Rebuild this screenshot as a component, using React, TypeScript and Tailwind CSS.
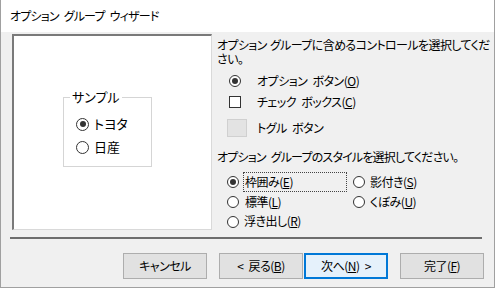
import React from "react";

function Radio({ checked = false, size = 12 }: { checked?: boolean; size?: number }) {
  return (
    <span
      className={
        size === 13
          ? "w-[13px] h-[13px] shrink-0 rounded-full border border-[#333] bg-white flex items-center justify-center"
          : "w-[12px] h-[12px] shrink-0 rounded-full border border-[#333] bg-white flex items-center justify-center"
      }
    >
      {checked && <span className="w-[6px] h-[6px] rounded-full bg-[#333]" />}
    </span>
  );
}

function Button({ children, focused = false }: { children: React.ReactNode; focused?: boolean }) {
  return (
    <div
      className={
        focused
          ? "w-[84px] h-[26px] flex items-center justify-center bg-[#e5f1fb] border-2 border-[#0078d7]"
          : "w-[84px] h-[26px] flex items-center justify-center bg-[#e1e1e1] border border-[#adadad]"
      }
    >
      {children}
    </div>
  );
}

export default function App() {
  return (
    <div className="w-[497px] h-[297px] bg-white text-[12px] text-black font-['Noto_Sans_CJK_JP','Noto_Sans',sans-serif] [font-feature-settings:'palt'] tracking-[-0.5px] [word-spacing:3px] whitespace-nowrap overflow-hidden">
      <div className="w-[495px] h-[288px] border-l border-r border-b border-[#a0a0a0] flex flex-col">
        {/* Title bar */}
        <div className="h-[32px] shrink-0 bg-white flex items-center pl-[9px] leading-none tracking-[-0.8px]">
          オプション グループ ウィザード
        </div>

        {/* Body */}
        <div className="flex-1 bg-[#f0f0f0] flex flex-col">
          <div className="h-[198px] shrink-0 flex pt-[2px]">
            {/* Preview */}
            <div className="ml-[11px] w-[200px] h-[196px] shrink-0 bg-white border-t-2 border-l-2 border-r border-b border-t-[#7a7a7a] border-l-[#7a7a7a] border-r-[#d9d9d9] border-b-[#d9d9d9] pl-[49px] pt-[61px] tracking-normal">
              <div className="relative w-[89px] h-[70px] border border-[#d5d5d5]">
                <span className="absolute -top-[9px] left-[6px] bg-white px-[2px] leading-[16px] text-[13px]">
                  サンプル
                </span>
                <div className="flex items-center mt-[18px] ml-[12px] gap-[5px] text-[13px] leading-[16px]">
                  <Radio checked size={13} />
                  <span>トヨタ</span>
                </div>
                <div className="flex items-center mt-[7px] ml-[12px] gap-[5px] text-[13px] leading-[16px]">
                  <Radio size={13} />
                  <span>日産</span>
                </div>
              </div>
            </div>

            {/* Options */}
            <div className="ml-[5px] flex-1 flex flex-col">
              <div className="pt-[4px] leading-[14px] tracking-[-0.6px] [word-spacing:1px]">
                オプション グループに含めるコントロールを選択してくだ
                <br />
                さい。
              </div>
              <div className="mt-[5px] h-[20px] flex items-center">
                <span className="ml-[12px]">
                  <Radio checked />
                </span>
                <span className="ml-[16px]">
                  オプション ボタン(<u>O</u>)
                </span>
              </div>
              <div className="mt-[1px] h-[20px] flex items-center">
                <span className="ml-[12px] w-[12px] h-[12px] border border-[#333] bg-white" />
                <span className="ml-[16px]">
                  チェック ボックス(<u>C</u>)
                </span>
              </div>
              <div className="mt-[7px] h-[20px] flex items-center">
                <span className="ml-[10px] w-[20px] h-[18px] bg-[#e3e3e3] border border-[#d0d0d0]" />
                <span className="ml-[10px]">トグル ボタン</span>
              </div>

              <div className="mt-[12px] leading-[14px] tracking-[-0.8px]">
                オプション グループのスタイルを選択してください。
              </div>

              <div className="mt-[8px] h-[20px] flex items-center">
                <span className="ml-[10px]">
                  <Radio checked />
                </span>
                <span className="ml-[4px] w-[104px] h-[20px] border border-dotted border-[#444] flex items-center pl-[1px]">
                  枠囲み(<u>E</u>)
                </span>
                <span className="ml-[6px]">
                  <Radio />
                </span>
                <span className="ml-[5px]">
                  影付き(<u>S</u>)
                </span>
              </div>
              <div className="h-[19px] flex items-center">
                <span className="ml-[10px]">
                  <Radio />
                </span>
                <span className="ml-[4px] w-[104px] pl-[2px]">
                  標準(<u>L</u>)
                </span>
                <span className="ml-[6px]">
                  <Radio />
                </span>
                <span className="ml-[5px]">
                  くぼみ(<u>U</u>)
                </span>
              </div>
              <div className="h-[19px] flex items-center">
                <span className="ml-[10px] mt-[3px]">
                  <Radio />
                </span>
                <span className="ml-[4px] pl-[1px]">
                  浮き出し(<u>R</u>)
                </span>
              </div>
            </div>
          </div>

          {/* Separator */}
          <div className="mt-[7px] ml-[9px] w-[472px] h-[2px] bg-[#6d6d6d]" />

          {/* Buttons */}
          <div className="mt-[14px] flex pl-[122px]">
            <Button>キャンセル</Button>
            <div className="ml-[12px]">
              <Button>
                &lt; 戻る(<u>B</u>)
              </Button>
            </div>
            <div className="ml-[1px]">
              <Button focused>
                次へ(<u>N</u>) &gt;
              </Button>
            </div>
            <div className="ml-[12px]">
              <Button>
                完了(<u>F</u>)
              </Button>
            </div>
          </div>
        </div>
      </div>
    </div>
  );
}
